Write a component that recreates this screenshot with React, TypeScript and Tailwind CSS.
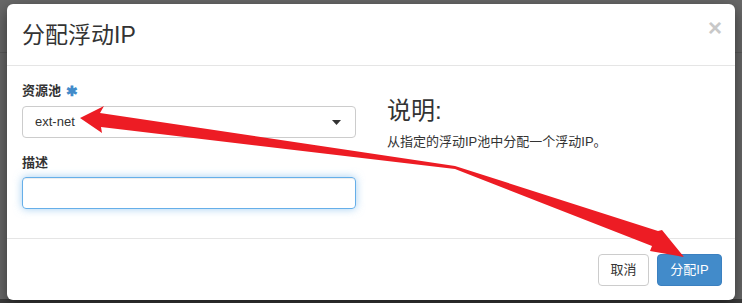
import React from "react";

export default function App() {
  const font = { fontFamily: '"Liberation Sans", "Noto Sans CJK SC", sans-serif' };
  return (
    <div className="relative h-[303px] w-[742px] overflow-hidden bg-[#686868]" style={font}>
      {/* faint page content behind overlay */}
      <div className="absolute left-0 top-[52px] h-px w-[742px] bg-[#5a5a5a]" />
      <div className="absolute bottom-0 left-0 h-[4px] w-[742px] bg-[#3c3c3c]" />
      <div className="relative pl-[7px] pt-[4px]">
        <div className="w-[728px] rounded-[6px] bg-white shadow-[0_5px_15px_rgba(0,0,0,0.5)] text-[#333]">
          {/* header */}
          <div className="flex h-[62px] items-start justify-between border-b border-[#e5e5e5] px-[15px]">
            <h4 className="pt-[15px] text-[23px] leading-[32px] text-[#333]">分配浮动IP</h4>
            <span className="mt-[8px] mr-[-2px] text-[24px] font-bold leading-[32px] text-[#c8c8c8]">×</span>
          </div>
          {/* body */}
          <div className="flex h-[172px] gap-[30px] px-[15px] pt-[15px]">
            <div className="flex w-[334px] flex-col">
              <label className="flex items-center gap-[5px] text-[13px] font-bold leading-[20px]">
                资源池
                <span className="text-[14px] leading-none text-[#428bca]">✱</span>
              </label>
              <div className="mt-[5px] flex h-[32px] items-center justify-between rounded-[4px] border border-[#ccc] pl-[12px] pr-[14px] text-[13px]">
                <span>ext-net</span>
                <svg width="9" height="5" viewBox="0 0 9 5">
                  <path d="M0 0 H9 L4.5 5 Z" fill="#333" />
                </svg>
              </div>
              <label className="mt-[15px] text-[13px] font-bold leading-[20px]">描述</label>
              <div className="mt-[4px] h-[32px] rounded-[4px] border border-[#66afe9] shadow-[inset_0_1px_1px_rgba(0,0,0,0.075),0_0_8px_rgba(102,175,233,0.6)]" />
            </div>
            <div className="flex w-[334px] flex-col pl-px">
              <h3 className="mt-[16px] text-[24px] leading-[28px]">说明:</h3>
              <p className="mt-[8px] text-[13px] leading-[18px]">从指定的浮动IP池中分配一个浮动IP。</p>
            </div>
          </div>
          {/* footer */}
          <div className="flex h-[62px] items-start justify-end gap-[8px] border-t border-[#e5e5e5] px-[13px] pt-[15px]">
            <button className="h-[32px] w-[51px] rounded-[4px] border border-[#ccc] bg-white text-[13px] text-[#333]">取消</button>
            <button className="h-[32px] w-[65px] rounded-[4px] border border-[#3b80c0] bg-[#428bca] text-[13px] text-white">分配IP</button>
          </div>
        </div>
      </div>
      {/* red annotation arrows */}
      <svg className="pointer-events-none absolute left-0 top-0" width="742" height="303" viewBox="0 0 742 303">
        <polygon
          points="80,118 104,106 100,113 455,166 658,231 662,230 684,257 650,251 652,246 455,169 101,127 102,133"
          fill="#ed1c24"
        />
      </svg>
    </div>
  );
}
